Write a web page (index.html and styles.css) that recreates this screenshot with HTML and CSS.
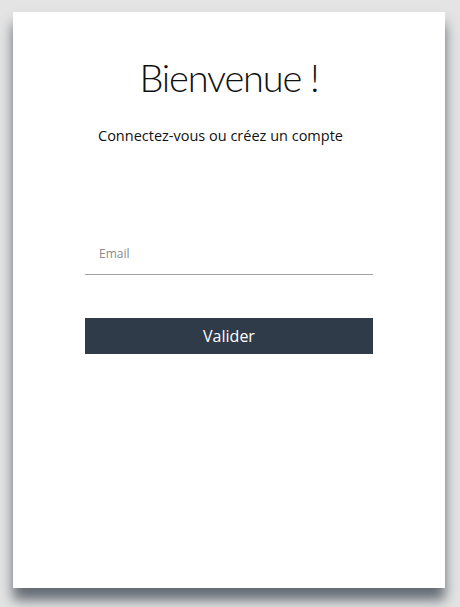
FILE: index.html
```html
<!DOCTYPE html>
<html lang="fr">
<head>
    <meta charset="UTF-8">
    <meta name="viewport" content="width=device-width, initial-scale=1.0">
    <title>Connexion</title>
    <link rel="stylesheet" href="styles.css">
</head>
<body>

<div class="login-card">
    <h1 class="title">Bienvenue !</h1>
    <p class="subtitle">Connectez-vous ou créez un compte</p>

    <form class="login-form" action="#">
        <div class="form-group">
            <input type="email" id="email" placeholder="Email">
        </div>
        <button type="submit" class="submit-btn">Valider</button>
    </form>
</div>

</body>
</html>
```

FILE: styles.css
```css
html {
    background-color: #e4e4e4;
}

body {
    font-family: "Open Sans", sans-serif;
    margin: 0;
    padding: 12px 0 20px 13px;
}

.login-card {
    width: 432px;
    height: 576px;
    box-sizing: border-box;
    background: white;
    box-shadow: 0 12px 12px rgba(55, 65, 78, 0.75);
    padding: 41px 72px 0;
}

.title {
    margin: 0;
    font-family: Lato, "Open Sans", sans-serif;
    font-size: 38px;
    font-weight: 300;
    letter-spacing: -1.2px;
    text-align: center;
    color: #111;
    line-height: 48px;
}

.subtitle {
    margin: 25px 0 0 13px;
    font-size: 14.5px;
    font-weight: 400;
    color: #111;
}

.login-form {
    margin-top: 92px;
}

.form-group input {
    width: 100%;
    box-sizing: border-box;
    border: none;
    border-bottom: 1px solid #a3a3a3;
    padding: 8px 14px 12px;
    font-family: inherit;
    font-size: 12px;
    outline: none;
}

.form-group input::placeholder {
    color: #8a8a8a;
}

.submit-btn {
    display: block;
    width: 100%;
    height: 36px;
    margin-top: 43px;
    background-color: #2f3b48;
    color: white;
    border: none;
    font-family: inherit;
    font-size: 16px;
    cursor: pointer;
}
```
